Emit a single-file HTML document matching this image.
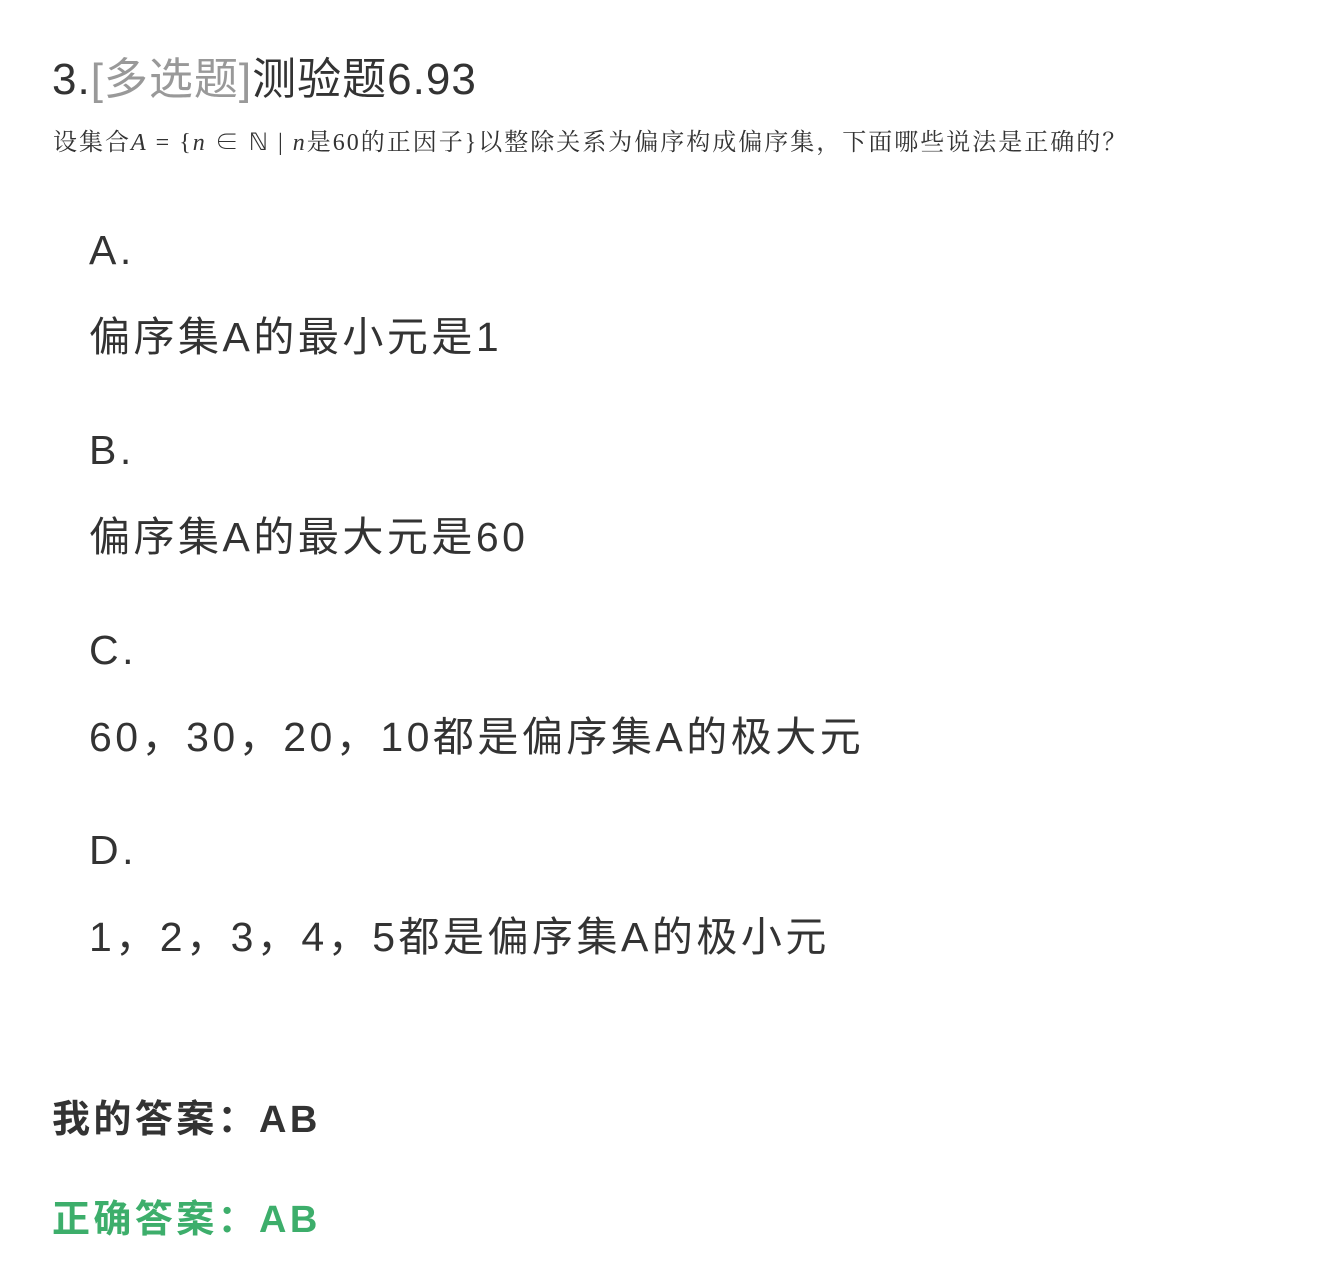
<!DOCTYPE html>
<html><head><meta charset="utf-8"><style>
html,body{margin:0;padding:0;background:#fff;}
body{width:1322px;height:1288px;position:relative;overflow:hidden;font-family:"Liberation Sans","Noto Sans CJK SC",sans-serif;color:#333;}
.a{position:absolute;white-space:nowrap;}
.t{left:52px;top:50px;font-size:44px;line-height:60px;color:#333;letter-spacing:1px;}
.t .g{color:#999;}
.q{left:53px;top:126px;font-size:24px;line-height:34px;font-family:"Liberation Serif","Noto Serif CJK SC",serif;color:#333;letter-spacing:2px;}
.q i{font-style:italic;}
.o{left:89px;font-size:41px;line-height:60px;color:#333;letter-spacing:3.5px;}
.ans{left:52px;font-size:38px;line-height:50px;font-weight:bold;letter-spacing:3.4px;}
</style></head><body>
<div class="a t">3.<span class="g">[多选题]</span>测验题6.93</div>
<div class="a q">设集合<i>A</i> = {<i>n</i> ∈ ℕ | <i>n</i>是60的正因子}以整除关系为偏序构成偏序集，下面哪些说法是正确的？</div>
<div class="a o" style="top:220px">A.</div>
<div class="a o" style="top:307px">偏序集A的最小元是1</div>
<div class="a o" style="top:420px">B.</div>
<div class="a o" style="top:507px">偏序集A的最大元是60</div>
<div class="a o" style="top:620px">C.</div>
<div class="a o" style="top:707px">60，30，20，10都是偏序集A的极大元</div>
<div class="a o" style="top:820px">D.</div>
<div class="a o" style="top:907px">1，2，3，4，5都是偏序集A的极小元</div>
<div class="a ans" style="top:1095px;color:#333">我的答案：AB</div>
<div class="a ans" style="top:1195px;color:#3dae6b">正确答案：AB</div>
</body></html>
